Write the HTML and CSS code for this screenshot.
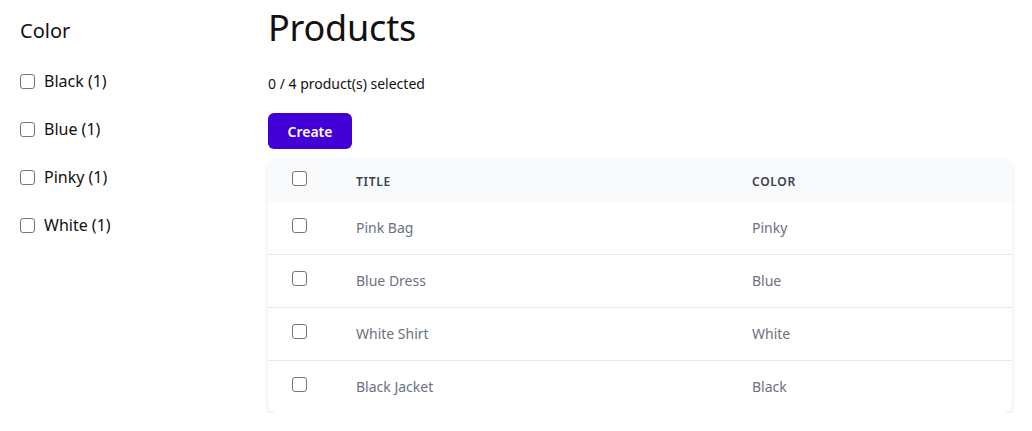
FILE: index.html
```html
<!DOCTYPE html>
<html>
<head>
<meta charset="utf-8">
<link rel="stylesheet" href="styles.css">
</head>
<body>
<div class="page">
  <aside class="sidebar">
    <h2 class="filter-title">Color</h2>
    <ul class="filter-list">
      <li><label class="filter-item"><input type="checkbox" class="cb"><span>Black (1)</span></label></li>
      <li><label class="filter-item"><input type="checkbox" class="cb"><span>Blue (1)</span></label></li>
      <li><label class="filter-item"><input type="checkbox" class="cb"><span>Pinky (1)</span></label></li>
      <li><label class="filter-item"><input type="checkbox" class="cb"><span>White (1)</span></label></li>
    </ul>
  </aside>
  <main class="main">
    <h1 class="title">Products</h1>
    <p class="selected">0 / 4 product(s) selected</p>
    <button class="btn">Create</button>
    <div class="card">
      <div class="row head">
        <div class="cell"><input type="checkbox" class="cb"></div>
        <div class="cell">Title</div>
        <div class="cell">Color</div>
      </div>
      <div class="body">
        <div class="row">
          <div class="cell"><input type="checkbox" class="cb"></div>
          <div class="cell">Pink Bag</div>
          <div class="cell">Pinky</div>
        </div>
        <div class="row">
          <div class="cell"><input type="checkbox" class="cb"></div>
          <div class="cell">Blue Dress</div>
          <div class="cell">Blue</div>
        </div>
        <div class="row">
          <div class="cell"><input type="checkbox" class="cb"></div>
          <div class="cell">White Shirt</div>
          <div class="cell">White</div>
        </div>
        <div class="row">
          <div class="cell"><input type="checkbox" class="cb"></div>
          <div class="cell">Black Jacket</div>
          <div class="cell">Black</div>
        </div>
      </div>
    </div>
  </main>
</div>
</body>
</html>
```

FILE: styles.css
```css
* { box-sizing: border-box; }
html, body { margin: 0; padding: 0; background: #fff; }
body {
  font-family: "Noto Sans", "Open Sans", sans-serif;
  color: #111;
}
.page {
  display: flex;
  padding: 8px 20px 0 20px;
}
.sidebar {
  width: 248px;
  flex: none;
}
.filter-title {
  font-size: 20px;
  line-height: 28px;
  font-weight: 400;
  margin: 9px 0 0 0;
}
.filter-list {
  list-style: none;
  margin: 24px 0 0 0;
  padding: 0;
  display: flex;
  flex-direction: column;
  gap: 24px;
}
.filter-item {
  display: flex;
  align-items: center;
  gap: 9px;
  font-size: 16px;
  line-height: 24px;
}
.cb {
  -webkit-appearance: none;
  appearance: none;
  width: 15px;
  height: 15px;
  margin: 0;
  border: 1px solid #767676;
  border-radius: 3px;
  background: #fff;
  flex: none;
  display: block;
}
.main {
  flex: 1;
  min-width: 0;
}
.title {
  font-size: 36px;
  line-height: 40px;
  font-weight: 400;
  margin: 0;
  letter-spacing: -0.2px;
}
.selected {
  font-size: 14px;
  line-height: 20px;
  margin: 26px 0 0 0;
}
.btn {
  display: block;
  margin-top: 19px;
  width: 84px;
  height: 36px;
  border: none;
  border-radius: 6px;
  background: #4200d6;
  color: #fff;
  font-family: inherit;
  font-size: 14px;
  font-weight: 600;
}
.card {
  margin-top: 9px;
  border-radius: 8px;
  background: #fff;
  box-shadow: 0 4px 6px -1px rgba(0,0,0,0.1), 0 2px 4px -2px rgba(0,0,0,0.1);
  overflow: hidden;
}
.row {
  display: grid;
  grid-template-columns: 64px 396px 1fr;
  padding-left: 24px;
  height: 52px;
  align-items: center;
  font-size: 14px;
  color: #6b7280;
}
.body .row + .row {
  height: 53px;
  border-top: 1px solid #e5e7eb;
}
.body .cell { padding-bottom: 2px; }
.body .cell:first-child { padding-bottom: 6px; }
.row.head {
  height: 44px;
  background: #f9fafb;
  font-size: 12px;
  font-weight: 600;
  text-transform: uppercase;
  letter-spacing: 0.06em;
  color: #374151;
}
.row.head .cell { padding-top: 3px; }
.row.head .cell:first-child { padding-top: 0; padding-bottom: 4px; }
```
